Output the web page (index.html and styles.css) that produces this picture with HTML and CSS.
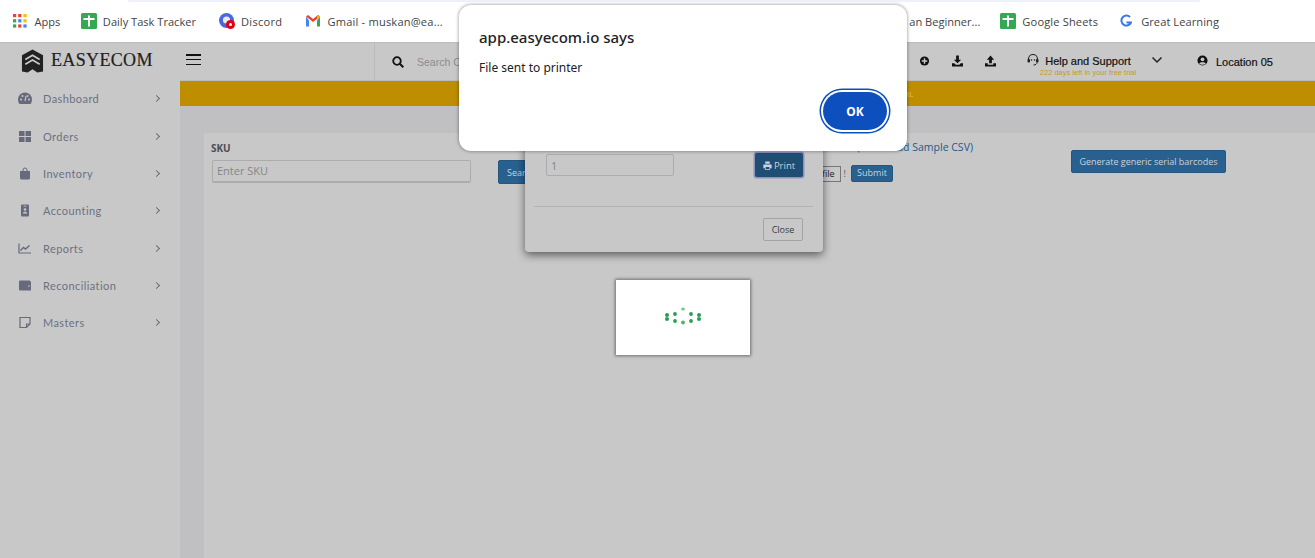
FILE: index.html
```html
<!DOCTYPE html>
<html lang="en">
<head>
<meta charset="utf-8">
<title>EasyEcom</title>
<link rel="stylesheet" href="styles.css">
</head>
<body>
<div class="chrome">
  <div class="omnibox-edge"></div>
  <nav class="bookmarks">
    <div class="bm-group">
      <a class="bm bm-apps"><svg class="bm-icon" viewBox="0 0 14 14"><rect x="0" y="0" width="3.2" height="3.2" fill="#ea4335"/><rect x="5.2" y="0" width="3.2" height="3.2" fill="#ea4335"/><rect x="10.4" y="0" width="3.2" height="3.2" fill="#fbbc04"/><rect x="0" y="5.2" width="3.2" height="3.2" fill="#34a853"/><rect x="5.2" y="5.2" width="3.2" height="3.2" fill="#4285f4"/><rect x="10.4" y="5.2" width="3.2" height="3.2" fill="#fbbc04"/><rect x="0" y="10.4" width="3.2" height="3.2" fill="#34a853"/><rect x="5.2" y="10.4" width="3.2" height="3.2" fill="#ea4335"/><rect x="10.4" y="10.4" width="3.2" height="3.2" fill="#4285f4"/></svg>Apps</a>
      <a class="bm"><svg class="bm-icon bm-icon-lg" viewBox="0 0 16 16"><rect width="16" height="16" rx="1.5" fill="#34a853"/><path d="M7 2.500h2v2.500h4.500v2h-4.500v6.500h-2v-6.500h-4.500v-2h4.500z" fill="#fff"/></svg>Daily Task Tracker</a>
      <a class="bm bm-discord"><svg class="bm-icon bm-icon-lg" viewBox="0 0 16 16"><circle cx="7.500" cy="7.500" r="7.500" fill="#4a67e0"/><circle cx="7.500" cy="7" r="3.600" fill="#e8ebfa"/><circle cx="11.500" cy="11.500" r="4.500" fill="#e0000f"/><circle cx="11.500" cy="11.500" r="1.500" fill="#fff"/></svg>Discord</a>
      <a class="bm bm-gmail"><svg class="bm-icon bm-icon-lg" viewBox="0 0 16 16"><path d="M1 3.500v10h3v-6z" fill="#4285f4"/><path d="M12 7.500v6h3v-10z" fill="#34a853"/><path d="M1 3.500l7 5.500 7-5.500-2-1.500-5 4-5-4z" fill="#ea4335"/><path d="M12 3l3 .500-3 4z" fill="#fbbc04"/></svg>Gmail - muskan@ea...</a>
    </div>
    <div class="bm-group">
      <a class="bm bm-clipped">an Beginner...</a>
      <a class="bm bm-sheets"><svg class="bm-icon bm-icon-lg" viewBox="0 0 16 16"><rect width="16" height="16" rx="1.5" fill="#34a853"/><path d="M7 2.500h2v2.500h4.500v2h-4.500v6.500h-2v-6.500h-4.500v-2h4.500z" fill="#fff"/></svg>Google Sheets</a>
      <a class="bm bm-gl"><svg class="bm-icon bm-icon-g" viewBox="0 0 12 14"><path d="M10 3a5 5 0 1 0 1 5.500h-4.500" fill="none" stroke="#3b78e7" stroke-width="2"/></svg>Great Learning</a>
    </div>
  </nav>
</div>

<header class="topbar">
  <div class="brand">
    <svg class="brand-mark" viewBox="0 0 24 24"><path d="M12 0l11 6v17l-6 1-5-3.500-5 3.500-6-1V6z" fill="#222"/><path d="M4.500 10.500l7.500-4.500 7.500 4.500M4.500 15.500l7.500-4.500 7.500 4.500" fill="none" stroke="#c8c8c8" stroke-width="1.800"/></svg>
    <span class="brand-name">EASYECOM</span>
  </div>
  <button class="hamburger"><span></span><span></span><span></span></button>
  <div class="search">
    <svg class="search-icon" viewBox="0 0 12 12"><circle cx="5" cy="5" r="3.800" fill="none" stroke="#111" stroke-width="1.800"/><path d="M7.800 7.800l3.500 3.500" stroke="#111" stroke-width="2"/></svg>
    <span class="search-text">Search C</span>
  </div>
  <div class="actions">
    <svg class="act" viewBox="0 0 12 12"><circle cx="6" cy="6" r="5" fill="#111"/><path d="M6 3v6M3 6h6" stroke="#c8c8c8" stroke-width="1.600"/></svg>
    <svg class="act" viewBox="0 0 12 12"><path d="M4.500 0h3v4.500h2.500l-4 4-4-4h2.500zM0 8.500h2.500l1.500 1.500h4l1.500-1.500h2.500v3.500h-12z" fill="#111"/></svg>
    <svg class="act" viewBox="0 0 12 12"><path d="M4.500 8.500h3v-4h2.500l-4-4.500-4 4.500h2.500zM0 8.500h3v1.500h6v-1.500h3v3.500h-12z" fill="#111"/></svg>
  </div>
  <div class="help">
    <svg class="help-icon" viewBox="0 0 12 12"><path d="M1.500 7v-2a4.500 4.500 0 0 1 9 0v2" fill="none" stroke="#222" stroke-width="1.100"/><rect x="0.500" y="5" width="2.500" height="3.500" rx="1" fill="#222"/><rect x="9" y="5" width="2.500" height="3.500" rx="1" fill="#222"/><circle cx="4.500" cy="6" r=".8" fill="#222"/><circle cx="7.500" cy="6" r=".8" fill="#222"/><path d="M10 8.500c0 1.500-1.500 2.500-3.500 2.500" fill="none" stroke="#222"/></svg>
    <div class="help-text">
      <span class="help-title">Help and Support</span>
      <span class="help-sub">222 days left in your free trial</span>
    </div>
    <svg class="help-caret" viewBox="0 0 12 8"><path d="M1.500 1.500l4.500 4.500 4.500-4.500" fill="none" stroke="#222" stroke-width="1.500"/></svg>
  </div>
  <div class="location">
    <svg class="loc-icon" viewBox="0 0 12 12"><circle cx="6" cy="6" r="5.500" fill="#111"/><circle cx="6" cy="4.700" r="2" fill="#c8c8c8"/><path d="M2.500 9.500c.6-2 6.400-2 7 0-1.800 1.600-5.200 1.600-7 0z" fill="#c8c8c8"/></svg>
    <span>Location 05</span>
  </div>
</header>

<div class="layout">
  <aside class="sidebar">
    <a class="side-item"><svg class="side-icon" viewBox="0 0 14 12"><path d="M7 0a7 7 0 0 0-7 7c0 1.800.6 3.500 1.500 4.500h11c.9-1 1.500-2.700 1.500-4.500a7 7 0 0 0-7-7z" fill="#666a7c"/><circle cx="3" cy="7" r="1" fill="#c8c8c8"/><circle cx="4.500" cy="3.500" r="1" fill="#c8c8c8"/><circle cx="9.500" cy="3.500" r="1" fill="#c8c8c8"/><circle cx="11" cy="7" r="1" fill="#c8c8c8"/><path d="M7 8.500l1-5" stroke="#c8c8c8" stroke-width="1.200"/></svg><span class="side-label">Dashboard</span><span class="chev"></span></a>
    <a class="side-item"><svg class="side-icon" viewBox="0 0 14 12"><path d="M1 .500h5.500v5h-5.500zM7.500 .500h5.500v5h-5.500zM1 6.500h5.500v5h-5.500zM7.500 6.500h5.500v5h-5.500z" fill="#666a7c"/></svg><span class="side-label">Orders</span><span class="chev"></span></a>
    <a class="side-item"><svg class="side-icon" viewBox="0 0 14 12"><path d="M2 3.500h10v7a1.500 1.500 0 0 1-1.500 1.500h-7a1.500 1.500 0 0 1-1.500-1.500z" fill="#666a7c"/><path d="M5 4.500v-2a2 2 0 0 1 4 0v2" fill="none" stroke="#666a7c"/></svg><span class="side-label">Inventory</span><span class="chev"></span></a>
    <a class="side-item"><svg class="side-icon" viewBox="0 0 14 12"><rect x="3" y="0" width="8" height="12" rx="1" fill="#666a7c"/><rect x="5.500" y="1.200" width="3" height=".8" fill="#c8c8c8"/><circle cx="7" cy="5" r="1.300" fill="#c8c8c8"/><path d="M4.800 9c0-2.200 4.400-2.200 4.400 0z" fill="#c8c8c8"/></svg><span class="side-label">Accounting</span><span class="chev"></span></a>
    <a class="side-item"><svg class="side-icon" viewBox="0 0 14 12"><path d="M1 1v9.500h12" fill="none" stroke="#666a7c" stroke-width="1.200"/><path d="M2.500 8l3-3 2 1.500 4-3.500" fill="none" stroke="#666a7c" stroke-width="1.400"/></svg><span class="side-label">Reports</span><span class="chev"></span></a>
    <a class="side-item"><svg class="side-icon" viewBox="0 0 14 12"><path d="M1 2a1 1 0 0 1 1-1h10v1h1v9h-11a1 1 0 0 1-1-1z" fill="#666a7c"/><circle cx="11" cy="6.500" r=".8" fill="#c8c8c8"/></svg><span class="side-label">Reconciliation</span><span class="chev"></span></a>
    <a class="side-item"><svg class="side-icon" viewBox="0 0 14 12"><path d="M2 1h10v6.500l-3.500 3.500h-6.500z M12 7.500h-3.500v3.500" fill="none" stroke="#666a7c" stroke-width="1.200"/></svg><span class="side-label">Masters</span><span class="chev"></span></a>
  </aside>
  <main class="main">
    <div class="banner"><span class="banner-text">IL</span></div>
    <section class="panel">
      <div class="sku">
        <label class="sku-label">SKU</label>
        <div class="field sku-input">Enter SKU</div>
      </div>
      <button class="btn search-btn">Search</button>
      <div class="upload">
        <a class="csv-link">(Download Sample CSV)</a>
        <div class="upload-row">
          <span class="file-btn">file</span>
          <span class="bang">!</span>
          <button class="btn submit-btn">Submit</button>
        </div>
      </div>
      <button class="btn generate-btn">Generate generic serial barcodes</button>
    </section>
  </main>
</div>

<div class="modal">
  <div class="modal-row">
    <div class="field qty">1</div>
    <button class="btn print-btn"><svg class="print-icon" viewBox="0 0 12 12"><path d="M3 0.500h6v3h-6zM0.500 4.500h11v5h-2v2h-7v-2h-2zM3.500 8v2.500h5v-2.500z" fill="#c8d4e0" fill-rule="evenodd"/></svg>Print</button>
  </div>
  <hr class="modal-rule">
  <div class="modal-foot"><button class="close-btn">Close</button></div>
</div>

<div class="loader">
  <svg class="spinner" viewBox="0 0 36 20">
    <g fill="#2a9d50">
      <circle cx="2" cy="7" r="2"/><circle cx="2" cy="11" r="2"/>
      <circle cx="34" cy="7" r="2"/><circle cx="34" cy="11" r="2"/>
      <circle cx="10" cy="6" r="1.900"/><circle cx="26" cy="6" r="1.900"/>
      <circle cx="10" cy="13" r="1.900"/><circle cx="26" cy="13" r="1.900"/>
      <circle cx="18" cy="14.500" r="2" fill="#55b374"/>
      <ellipse cx="18" cy="1" rx="2" ry="1.500" fill="#7cc595"/>
    </g>
  </svg>
</div>

<div class="dialog">
  <h1 class="dialog-title">app.easyecom.io says</h1>
  <p class="dialog-text">File sent to printer</p>
  <div class="dialog-foot"><button class="ok-btn">OK</button></div>
</div>
</body>
</html>
```

FILE: styles.css
```css
* { box-sizing: border-box; }
html, body { margin: 0; height: 100%; overflow: hidden; }
body { width: 1315px; height: 558px; background: #c8c8c8; font-family: "Open Sans", "Liberation Sans", sans-serif; position: relative; }
a { text-decoration: none; }
button { font-family: inherit; cursor: default; }

/* Browser chrome */
.chrome { height: 43px; background: #fff; position: relative; border-bottom: 1px solid #bdbdbd; }
.omnibox-edge { position: absolute; left: 128px; top: 0; width: 1072px; height: 2px; background: #eef1fb; border-radius: 0 0 8px 8px; }
.bookmarks { display: flex; justify-content: space-between; height: 42px; align-items: center; padding: 0 96px 0 13px; }
.bm-group { display: flex; align-items: center; gap: 23px; }
.bm { display: flex; align-items: center; gap: 6px; font-family: "Open Sans", sans-serif; font-size: 11.080px; color: #3f4347; white-space: nowrap; }
.bm-apps { gap: 7.500px; margin-right: -2.500px; }
.bm-discord { letter-spacing: .3px; }
.bm-gmail { letter-spacing: .2px; }
.bm-sheets { letter-spacing: .15px; margin-right: -1px; }
.bm-clipped { margin-right: -3px; }
.bm-gl { gap: 9px; letter-spacing: .07px; }
.bm-icon { width: 14px; height: 14px; flex: none; }
.bm-icon-lg { width: 16px; height: 16px; }
.bm-icon-g { width: 12px; height: 14px; }

/* App header */
.topbar { height: 38px; background: #c8c8c8; border-bottom: 1px solid #bcbcbc; display: flex; align-items: center; }
.brand { display: flex; align-items: center; width: 186px; padding: 0 0 2px 21px; gap: 7px; }
.brand-mark { width: 23px; height: 24px; }
.brand-name { font-family: "Liberation Serif", serif; font-size: 18px; color: #222; letter-spacing: .35px; -webkit-text-stroke: .2px #222; }
.hamburger { width: 15px; height: 11px; margin-bottom: 4px; padding: 0; border: 0; background: none; display: flex; flex-direction: column; justify-content: space-between; }
.hamburger span { display: block; height: 1.500px; background: #111; }
.search { display: flex; align-items: center; align-self: stretch; margin-left: 173px; width: 520px; padding-left: 17px; border-left: 1px solid #bababa; gap: 13px; }
.search-icon { width: 12px; height: 12px; }
.search-text { font-size: 10.500px; color: #8b8b8f; font-family: "Liberation Sans", sans-serif; }
.actions { display: flex; gap: 22px; margin-left: 25px; }
.act { width: 11px; height: 12px; margin-bottom: 2px; }
.help { display: flex; align-items: center; margin-left: 31px; }
.help-icon { width: 12px; height: 12px; margin-right: 6px; margin-bottom: 3px; }
.help-text { display: flex; flex-direction: column; align-items: center; width: 96px; margin: 8px 0 0 -5px; font-family: "Liberation Sans", sans-serif; }
.help-title { font-size: 11px; line-height: 13px; color: #111; -webkit-text-stroke: .2px #111; }
.help-sub { font-size: 7.500px; line-height: 9px; color: #c49b2c; white-space: nowrap; }
.help-caret { width: 12px; height: 8px; margin-left: 15px; margin-bottom: 4px; }
.location { display: flex; align-items: center; gap: 8px; margin-left: 34px; font-family: "Liberation Sans", sans-serif; font-size: 11px; color: #111; -webkit-text-stroke: .2px #111; }
.loc-icon { width: 11px; height: 11px; margin-bottom: 2px; }

/* Layout */
.layout { display: flex; height: 477px; }
.sidebar { width: 180px; flex: none; background: #c8c8c8; margin-top: -.8px; }
.side-item { display: flex; align-items: center; height: 37.330px; padding-left: 18px; color: #6c7082; }
.side-icon { width: 14px; height: 13px; flex: none; margin-right: 11px; }
.side-label { flex: 1; font-family: Lato, sans-serif; font-size: 11px; letter-spacing: .42px; }
.chev { width: 5px; height: 5px; margin-right: 21px; border-top: 1.200px solid #6c7082; border-right: 1.200px solid #6c7082; transform: rotate(45deg); }

.main { flex: 1; background: #c0c0c2; min-width: 0; }
.banner { height: 25px; background: #bf8d00; padding-left: 727px; display: flex; align-items: center; }
.banner-text { font-size: 8px; color: #dcc257; }
.panel { margin: 27px 0 0 24px; height: 425px; background: #c8c8c8; display: flex; align-items: flex-start; padding: 9px 7px; font-family: "Open Sans", sans-serif; }
.sku { width: 260px; margin-right: 27px; }
.sku-label { display: block; font-size: 10px; line-height: 12px; font-weight: 700; color: #4d4f55; margin-bottom: 6px; letter-spacing: -.1px; }
.field { border: 1px solid #acacac; border-radius: 2px; color: #858588; font-size: 11px; display: flex; align-items: center; padding-left: 4px; }
.sku-input { height: 23px; margin-left: 1px; border-bottom-width: 2px; padding-bottom: 2px; }
.btn { background: #286090; border: 1px solid #24567f; border-radius: 2px; color: #c9d3dd; font-size: 9px; padding: 0; }
.search-btn { width: 60px; height: 24px; margin-top: 18px; text-align: left; padding-left: 8px; }
.upload { width: 275px; margin-left: 140px; }
.csv-link { display: block; font-size: 10.500px; line-height: 13px; color: #23598c; text-align: right; white-space: nowrap; margin-top: -1px; }
.upload-row { display: flex; align-items: center; justify-content: flex-end; padding-right: 80px; margin-top: 11px; gap: 2px; }
.file-btn { font-size: 9px; color: #222; border: 1px solid #777; height: 16px; padding: 0 5px 0 40px; display: flex; align-items: center; white-space: nowrap; }
.bang { font-size: 9px; color: #555; padding: 0 3px 0 1px; font-weight: 400; }
.submit-btn { width: 42px; height: 17px; padding-bottom: 2px; }
.generate-btn { width: 155px; height: 23px; margin: 8px 0 0 98px; }

/* Print modal */
.modal { position: absolute; left: 525px; top: 130px; width: 298px; height: 122px; background: #c8c8c8; border-radius: 0 0 4px 4px; box-shadow: 0 3px 8px rgba(0,0,0,.55); padding: 23px 20px 0 21px; }
.modal-row { display: flex; justify-content: space-between; align-items: flex-start; }
.qty { width: 128px; height: 22px; margin-top: 1px; font-size: 11px; }
.print-btn { display: flex; align-items: center; justify-content: center; gap: 2px; width: 48px; height: 24px; background: #204d74; box-shadow: 0 0 0 1.500px #8f8fc0; border: 0; font-size: 9.500px; }
.print-icon { width: 9px; height: 9px; }
.modal-rule { border: 0; border-top: 1px solid #b4b4b4; margin: 29px -10px 0 -12px; }
.modal-foot { display: flex; justify-content: flex-end; margin-top: 11px; }
.close-btn { width: 40px; height: 23px; background: none; border: 1px solid #a4a4a4; border-radius: 2px; font-size: 9px; color: #3b3b3b; padding: 0; }

/* Loader */
.loader { position: absolute; left: 616px; top: 280px; width: 134px; height: 75px; background: #fff; box-shadow: 0 0 3px 1px rgba(0,0,0,.45); display: flex; align-items: center; justify-content: center; }
.spinner { width: 36px; height: 20px; margin-top: 1px; overflow: visible; }

/* JS alert */
.dialog { position: absolute; left: 459px; top: 5px; width: 448px; height: 146px; background: #fff; border-radius: 12px; box-shadow: 0 0 3px 1px rgba(0,0,0,.28); padding: 22px 20px 0; font-family: "Noto Sans", "Open Sans", sans-serif; }
.dialog-title { margin: 0; font-size: 15px; line-height: 20px; font-weight: 500; color: #202124; }
.dialog-text { margin: 12px 0 0; font-size: 12px; line-height: 18px; color: #202124; }
.dialog-foot { display: flex; justify-content: flex-end; margin-top: 15px; }
.ok-btn { width: 64px; height: 38px; border: 0; border-radius: 19px; background: #0d50bd; color: #fff; font-size: 12px; font-weight: 700; box-shadow: 0 0 0 2px #fff, 0 0 0 3.500px #0d50bd; font-family: "Noto Sans", sans-serif; }
```
